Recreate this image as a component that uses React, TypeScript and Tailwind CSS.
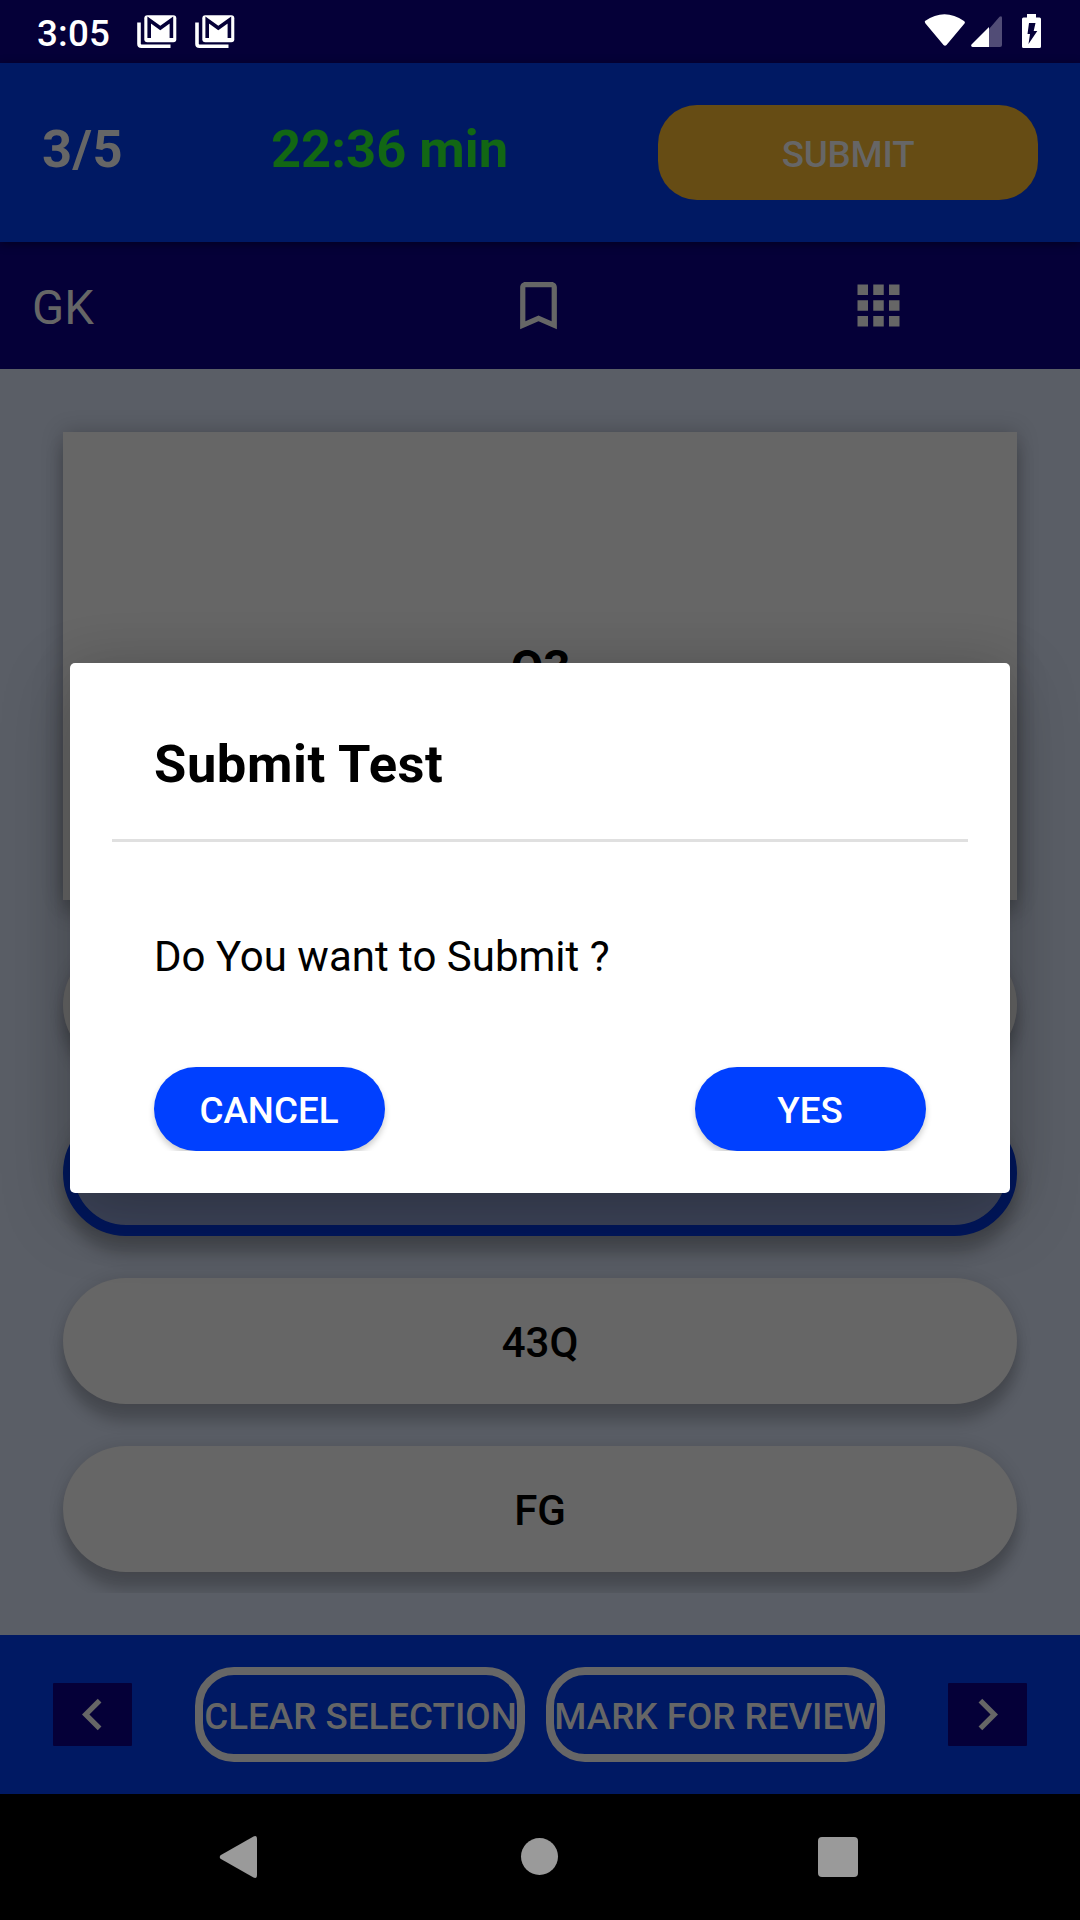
const GmailIcon = () => (
  <svg width="40" height="34" viewBox="0 0 40 34" className="block">
    <path d="M2 7.500V29Q2 31.200 4.500 31.200H33.500" fill="none" stroke="#fff" strokeWidth="3.600" />
    <rect x="7.300" y="0.300" width="32" height="27" rx="3" fill="#fff" />
    <path d="M12.200 23V5L23.300 13L34.400 5V23" fill="none" stroke="#050038" strokeWidth="3.600" />
  </svg>
);

const StatusBar = () => (
  <div className="flex h-[63px] items-start bg-[#050038] pl-[37px] pr-[39px] text-white">
    <span className="mt-[12px] w-[100px] text-[36.75px] font-medium leading-[43px] tracking-[0.2px]">3:05</span>
    <div className="mt-[15px] flex gap-[18px]">
      <GmailIcon />
      <GmailIcon />
    </div>
    <div className="ml-auto mt-[14px] flex">
      <svg width="42" height="33" viewBox="0 0 42 33" className="block">
        <path d="M1 7Q20.500 -6.500 40 7Q41.500 8 40.500 9.500L22.500 31Q21 32.500 19.500 31L1.500 9.500Q0.500 8 1 7Z" fill="#fff" />
      </svg>
      <svg width="32" height="33" viewBox="0 0 32 33" className="ml-[5px] block">
        <path d="M18 15L28.500 2.800Q31 1 31 4V31Q31 33 29 33H18Z" fill="#514c76" />
        <path d="M18 13V33H1.500Q-0.500 32.500 0.500 30.500Z" fill="#fff" />
      </svg>
      <svg width="19" height="34" viewBox="0 0 19 34" className="ml-[19px] block">
        <path d="M5 0H14V3.500H17.500Q19 3.500 19 5V32.500Q19 34 17.500 34H1.500Q0 34 0 32.500V5Q0 3.500 1.500 3.500H5Z" fill="#fff" />
        <path d="M7 9H13.500L11.700 17H15.300L6.500 30L8 20H5.500Z" fill="#050038" />
      </svg>
    </div>
  </div>
);

const Header = () => (
  <header className="relative z-10 flex h-[179px] items-start bg-[#001963] pl-[42px] pr-[42px] shadow-[0_2px_9px_rgba(0,0,0,0.450)]">
    <span className="mt-[55px] w-[229px] text-[52.5px] font-bold leading-[62px] tracking-[0.4px] text-[#666666]">3/5</span>
    <span className="mt-[55px] text-[52.5px] font-bold leading-[62px] text-[#126714]">22:36 min</span>
    <button className="ml-auto mt-[42px] h-[95px] w-[380px] rounded-[39px] bg-[#664c14] pt-[4px] text-[36.75px] font-medium tracking-[-0.2px] text-[#666666]">
      SUBMIT
    </button>
  </header>
);

const SectionBar = () => (
  <div className="flex h-[127px] items-start bg-[#050038] pl-[32px] text-[#666666]">
    <span className="mt-[38px] w-[475px] text-[47.25px] leading-[56px]">GK</span>
    <svg width="63" height="63" viewBox="0 0 24 24" fill="currentColor" className="mt-[32px] block">
      <path d="M17 3H7c-1.100 0-1.990.9-1.990 2L5 21l7-3 7 3V5c0-1.100-.9-2-2-2zm0 15l-5-2.180L7 18V5h10v13z" />
    </svg>
    <svg width="63" height="63" viewBox="0 0 24 24" fill="currentColor" className="ml-[276.500px] mt-[31.500px] block">
      <path d="M4 4h4v4H4zM10 4h4v4h-4zM16 4h4v4h-4zM4 10h4v4H4zM10 10h4v4h-4zM16 10h4v4h-4zM4 16h4v4H4zM10 16h4v4h-4zM16 16h4v4h-4z" />
    </svg>
  </div>
);

const Option = ({ label, selected = false }: { label: string; selected?: boolean }) => (
  <button
    className={
      selected
        ? "block h-[126px] w-full shrink-0 rounded-full border-[11px] border-[#00175c] bg-[#3d4459] text-[42px] font-medium text-black shadow-[0_18px_16px_rgba(0,0,0,0.220),0_0_18px_rgba(0,0,0,0.120)]"
        : "block h-[126px] w-full shrink-0 rounded-full bg-[#666666] pt-[3px] text-[42px] font-medium text-black shadow-[0_18px_14px_rgba(0,0,0,0.200),0_0_16px_rgba(0,0,0,0.120)]"
    }
  >
    {label}
  </button>
);

const Body = () => (
  <main className="h-[1266px] bg-[#5a5e66]">
    <div className="flex h-[1224px] flex-col gap-[42px] overflow-hidden px-[63px] pt-[63px]">
      <div className="flex h-[468px] shrink-0 items-center justify-center bg-[#666666] pl-px pt-[4px] text-[47.25px] font-bold text-black shadow-[0_16px_16px_rgba(0,0,0,0.180),0_0_20px_rgba(0,0,0,0.220)]">
        Q3
      </div>
      <Option label="12" />
      <Option label="32" selected />
      <Option label="43Q" />
      <Option label="FG" />
    </div>
  </main>
);

const Chevron = ({ d }: { d: string }) => (
  <button className="mt-[48px] flex h-[63px] w-[79px] shrink-0 items-center justify-center rounded-[1px] bg-[#050038]">
    <svg width="63" height="63" viewBox="0 0 24 24" fill="#666666" className="block shrink-0">
      <path d={d} />
    </svg>
  </button>
);

const BottomBar = () => (
  <footer className="flex h-[159px] items-start bg-[#001963] pl-[53px] text-[36.75px] font-medium text-[#666666]">
    <Chevron d="M15.410 7.410L14 6l-6 6 6 6 1.410-1.410L10.830 12z" />
    <button className="ml-[63px] mt-[32px] flex h-[95px] w-[330px] items-center justify-center whitespace-nowrap rounded-[39px] border-8 border-[#666666] pl-px pt-[4px]">
      CLEAR SELECTION
    </button>
    <button className="ml-[21px] mt-[32px] flex h-[95px] w-[339px] items-center justify-center whitespace-nowrap rounded-[39px] border-8 border-[#666666] pr-px pt-[4px]">
      MARK FOR REVIEW
    </button>
    <div className="ml-[63px]">
      <Chevron d="M10 6L8.590 7.410 13.170 12l-4.580 4.590L10 18l6-6z" />
    </div>
  </footer>
);

const NavBar = () => (
  <nav className="flex h-[126px] items-start bg-black pl-[219px]">
    <svg width="38" height="42" viewBox="0 0 38 42" className="mt-[42px] block">
      <path d="M34.500 0.500Q38 -1 38 3V39Q38 43 34.500 41.500L1.500 22.800Q0 21 1.500 19.200Z" fill="#9a9a9a" />
    </svg>
    <div className="ml-[264px] mt-[44px] size-[37px] rounded-full bg-[#9a9a9a]" />
    <div className="ml-[260px] mt-[43px] size-[40px] rounded-[4px] bg-[#9a9a9a]" />
  </nav>
);

const DialogButton = ({ children }: { children: string }) => (
  <button className="h-[84px] w-[231px] rounded-full bg-[#0040ff] pr-px pt-[3px] text-[36.75px] font-medium text-white shadow-[0_4px_6px_rgba(0,0,0,0.200)]">
    {children}
  </button>
);

const Dialog = () => (
  <div
    role="dialog"
    className="absolute left-[70px] top-[663px] z-20 flex h-[530px] w-[940px] flex-col rounded-[5px] bg-white px-[42px] text-black shadow-[0_20px_70px_rgba(0,0,0,0.220),0_0_50px_rgba(0,0,0,0.080)]"
  >
    <h1 className="mt-[70px] pl-[42px] text-[52.5px] font-bold leading-[62px] tracking-[0.55px]">Submit Test</h1>
    <hr className="mt-[44px] h-[3px] border-0 bg-[#e0e0e0]" />
    <p className="mt-[90px] pl-[42px] text-[42px] leading-[49px]">Do You want to Submit ?</p>
    <div className="mt-[76px] flex h-[94px] justify-between overflow-hidden px-[42px] pt-[10px]">
      <DialogButton>CANCEL</DialogButton>
      <DialogButton>YES</DialogButton>
    </div>
  </div>
);

export default function App() {
  return (
    <div className="relative h-[1920px] w-[1080px] overflow-hidden font-['Roboto',sans-serif]">
      <StatusBar />
      <Header />
      <SectionBar />
      <Body />
      <BottomBar />
      <NavBar />
      <Dialog />
    </div>
  );
}
